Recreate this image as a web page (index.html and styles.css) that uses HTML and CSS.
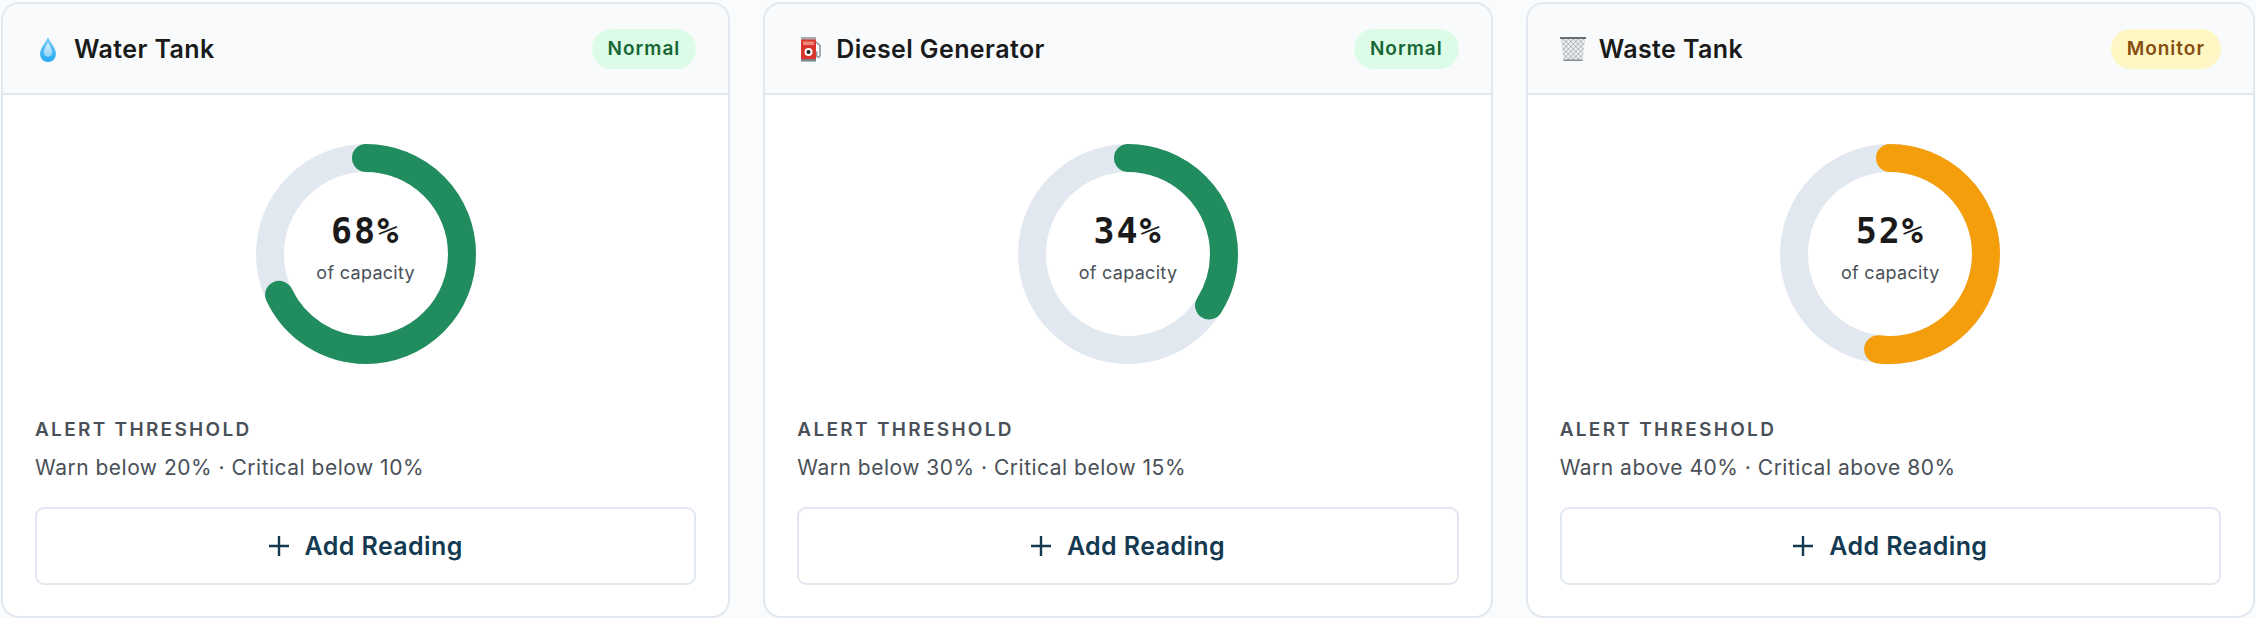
FILE: index.html
```html
<!DOCTYPE html>
<html lang="en">
<head>
    <meta charset="UTF-8">
    <meta name="viewport" content="width=device-width, initial-scale=1.0">
    <title>Tank Levels</title>
    <link rel="stylesheet" href="styles.css">
</head>
<body>
    <svg class="defs" width="0" height="0" aria-hidden="true">
        <defs>
            <linearGradient id="drop-fill" x1="0" y1="0" x2="0" y2="1">
                <stop offset="0" stop-color="#7fd0f7"/>
                <stop offset="1" stop-color="#27a8f0"/>
            </linearGradient>
            <linearGradient id="drop-shine" x1="0" y1="0" x2="0" y2="1">
                <stop offset="0" stop-color="#e3f4fc"/>
                <stop offset="1" stop-color="#8fd3f6"/>
            </linearGradient>
            <pattern id="mesh" width="3.500" height="3.500" patternUnits="userSpaceOnUse" patternTransform="rotate(45)">
                <rect width="3.500" height="3.500" fill="#eceeef"/>
                <path d="M0 0H3.500M0 0V3.500" stroke="#8f9396" stroke-width="1"/>
            </pattern>
            <g id="icon-plus">
                <path d="M10 0V20M0 10H20" fill="none" stroke="currentColor" stroke-width="2.400"/>
            </g>
        </defs>
    </svg>

    <div class="cards">
        <section class="card">
            <header class="card-head">
                <h2 class="card-title">
                    <svg class="emoji" viewBox="0 0 26 26">
                        <path d="M12 1C10 6 4 12 4 18a8 8 0 0 0 16 0C20 12 14 6 12 1Z" fill="url(#drop-fill)"/>
                        <path d="M12 6c-1 3-4 7-4 10.500a4 4 0 0 0 8 0C16 13 13 9 12 6Z" fill="url(#drop-shine)"/>
                    </svg>
                    Water Tank
                </h2>
                <span class="badge badge-normal">Normal</span>
            </header>
            <div class="card-body">
                <div class="gauge">
                    <svg class="ring" viewBox="0 0 220 220">
                        <circle class="ring-track" cx="110" cy="110" r="96"/>
                        <circle class="ring-fill ring-green" cx="110" cy="110" r="96" pathLength="100" stroke-dasharray="68 100"/>
                    </svg>
                    <div class="gauge-text">
                        <div class="gauge-value">68%</div>
                        <div class="gauge-unit">of capacity</div>
                    </div>
                </div>
                <div class="threshold-label">Alert Threshold</div>
                <p class="threshold-text">Warn below 20% · Critical below 10%</p>
                <button type="button" class="btn-add"><svg class="plus" viewBox="0 0 20 20"><use href="#icon-plus"/></svg>Add Reading</button>
            </div>
        </section>

        <section class="card">
            <header class="card-head">
                <h2 class="card-title">
                    <svg class="emoji" viewBox="0 0 26 26">
                        <path d="M3 1h15v3H3Z" fill="#a9acae"/>
                        <rect x="3" y="3.500" width="15" height="20.500" rx="1" fill="#d9352e"/>
                        <rect x="3" y="23" width="15" height="2.500" fill="#7d7f80"/>
                        <rect x="5" y="5.500" width="11" height="3.500" fill="#ee8a7c"/>
                        <circle cx="10.500" cy="16" r="4" fill="#fff"/>
                        <circle cx="10.500" cy="16" r="2" fill="#222"/>
                        <path d="M18 6l4 3.500v10a1.700 1.700 0 0 1-3.400 0v-4" fill="none" stroke="#8d9194" stroke-width="1.500"/>
                    </svg>
                    Diesel Generator
                </h2>
                <span class="badge badge-normal">Normal</span>
            </header>
            <div class="card-body">
                <div class="gauge">
                    <svg class="ring" viewBox="0 0 220 220">
                        <circle class="ring-track" cx="110" cy="110" r="96"/>
                        <circle class="ring-fill ring-green" cx="110" cy="110" r="96" pathLength="100" stroke-dasharray="34 100"/>
                    </svg>
                    <div class="gauge-text">
                        <div class="gauge-value">34%</div>
                        <div class="gauge-unit">of capacity</div>
                    </div>
                </div>
                <div class="threshold-label">Alert Threshold</div>
                <p class="threshold-text">Warn below 30% · Critical below 15%</p>
                <button type="button" class="btn-add"><svg class="plus" viewBox="0 0 20 20"><use href="#icon-plus"/></svg>Add Reading</button>
            </div>
        </section>

        <section class="card">
            <header class="card-head">
                <h2 class="card-title">
                    <svg class="emoji" viewBox="0 0 26 26">
                        <path d="M0 2h24l-2.500 22.500H2.500Z" fill="url(#mesh)"/>
                        <path d="M-1 1h26V3H-1Z" fill="#6a6f72"/>
                        <path d="M2.500 23.500h19v1.500h-19Z" fill="#8a8e92"/>
                    </svg>
                    Waste Tank
                </h2>
                <span class="badge badge-monitor">Monitor</span>
            </header>
            <div class="card-body">
                <div class="gauge">
                    <svg class="ring" viewBox="0 0 220 220">
                        <circle class="ring-track" cx="110" cy="110" r="96"/>
                        <circle class="ring-fill ring-amber" cx="110" cy="110" r="96" pathLength="100" stroke-dasharray="52 100"/>
                    </svg>
                    <div class="gauge-text">
                        <div class="gauge-value">52%</div>
                        <div class="gauge-unit">of capacity</div>
                    </div>
                </div>
                <div class="threshold-label">Alert Threshold</div>
                <p class="threshold-text">Warn above 40% · Critical above 80%</p>
                <button type="button" class="btn-add"><svg class="plus" viewBox="0 0 20 20"><use href="#icon-plus"/></svg>Add Reading</button>
            </div>
        </section>
    </div>
</body>
</html>
```

FILE: styles.css
```css
:root {
    --border: #e2e8f0;
    --head-bg: #f8fafc;
    --text-dark: #1a1a1a;
    --text-muted: #4a5058;
    --navy: #143a52;
}

* {
    box-sizing: border-box;
    margin: 0;
    padding: 0;
}

body {
    font-family: 'Inter', sans-serif;
    background-color: #fafbfc;
    color: var(--text-dark);
}

.defs {
    display: block;
    height: 0;
}

.cards {
    display: grid;
    grid-template-columns: repeat(3, 1fr);
    gap: 33px;
    padding: 2px 1px 0;
}

.card {
    height: 616px;
    background-color: white;
    border: 2px solid var(--border);
    border-radius: 18px;
    overflow: hidden;
}

.card-head {
    height: 91px;
    display: flex;
    align-items: center;
    justify-content: space-between;
    padding: 0 32px 0 33px;
    background-color: var(--head-bg);
    border-bottom: 2px solid var(--border);
}

.card-title {
    display: flex;
    align-items: center;
    gap: 12px;
    font-size: 25px;
    font-weight: 600;
    letter-spacing: 0.4px;
}

.emoji {
    width: 26px;
    height: 26px;
    flex: none;
    overflow: visible;
}

.badge {
    height: 40px;
    display: flex;
    align-items: center;
    padding: 0 16px;
    border-radius: 20px;
    font-size: 19px;
    font-weight: 600;
    letter-spacing: 1px;
}

.badge-normal {
    background-color: #dcfce7;
    color: #166534;
}

.badge-monitor {
    background-color: #fef6c3;
    color: #854d0e;
}

.card-body {
    padding: 49px 32px 0;
}

.gauge {
    position: relative;
    width: 220px;
    height: 220px;
    margin: 0 auto 54px;
}

.ring {
    display: block;
    width: 220px;
    height: 220px;
    transform: rotate(-90deg);
}

.ring-track,
.ring-fill {
    fill: none;
    stroke-width: 28;
}

.ring-track {
    stroke: var(--border);
}

.ring-fill {
    stroke-linecap: round;
}

.ring-green {
    stroke: #218c5d;
}

.ring-amber {
    stroke: #f59e0b;
}

.gauge-text {
    position: absolute;
    inset: 0 0 14px;
    display: flex;
    flex-direction: column;
    align-items: center;
    justify-content: center;
}

.gauge-value {
    font-family: 'DejaVu Sans Mono', monospace;
    font-size: 35px;
    font-weight: 700;
    line-height: 42px;
    letter-spacing: 2px;
}

.gauge-unit {
    margin-top: 9px;
    font-size: 18px;
    line-height: 24px;
    letter-spacing: 0.3px;
    color: var(--text-muted);
}

.threshold-label {
    font-size: 19px;
    font-weight: 600;
    line-height: 24px;
    letter-spacing: 2.300px;
    text-transform: uppercase;
    color: var(--text-muted);
}

.threshold-text {
    margin-top: 12px;
    font-size: 21px;
    line-height: 28px;
    letter-spacing: 0.5px;
    color: var(--text-muted);
}

.btn-add {
    width: 100%;
    height: 78px;
    margin-top: 25px;
    display: flex;
    align-items: center;
    justify-content: center;
    gap: 16px;
    background-color: white;
    border: 2px solid var(--border);
    border-radius: 9px;
    font-family: inherit;
    font-size: 25px;
    font-weight: 600;
    letter-spacing: 0.4px;
    color: var(--navy);
}

.plus {
    width: 20px;
    height: 20px;
    flex: none;
}
```
